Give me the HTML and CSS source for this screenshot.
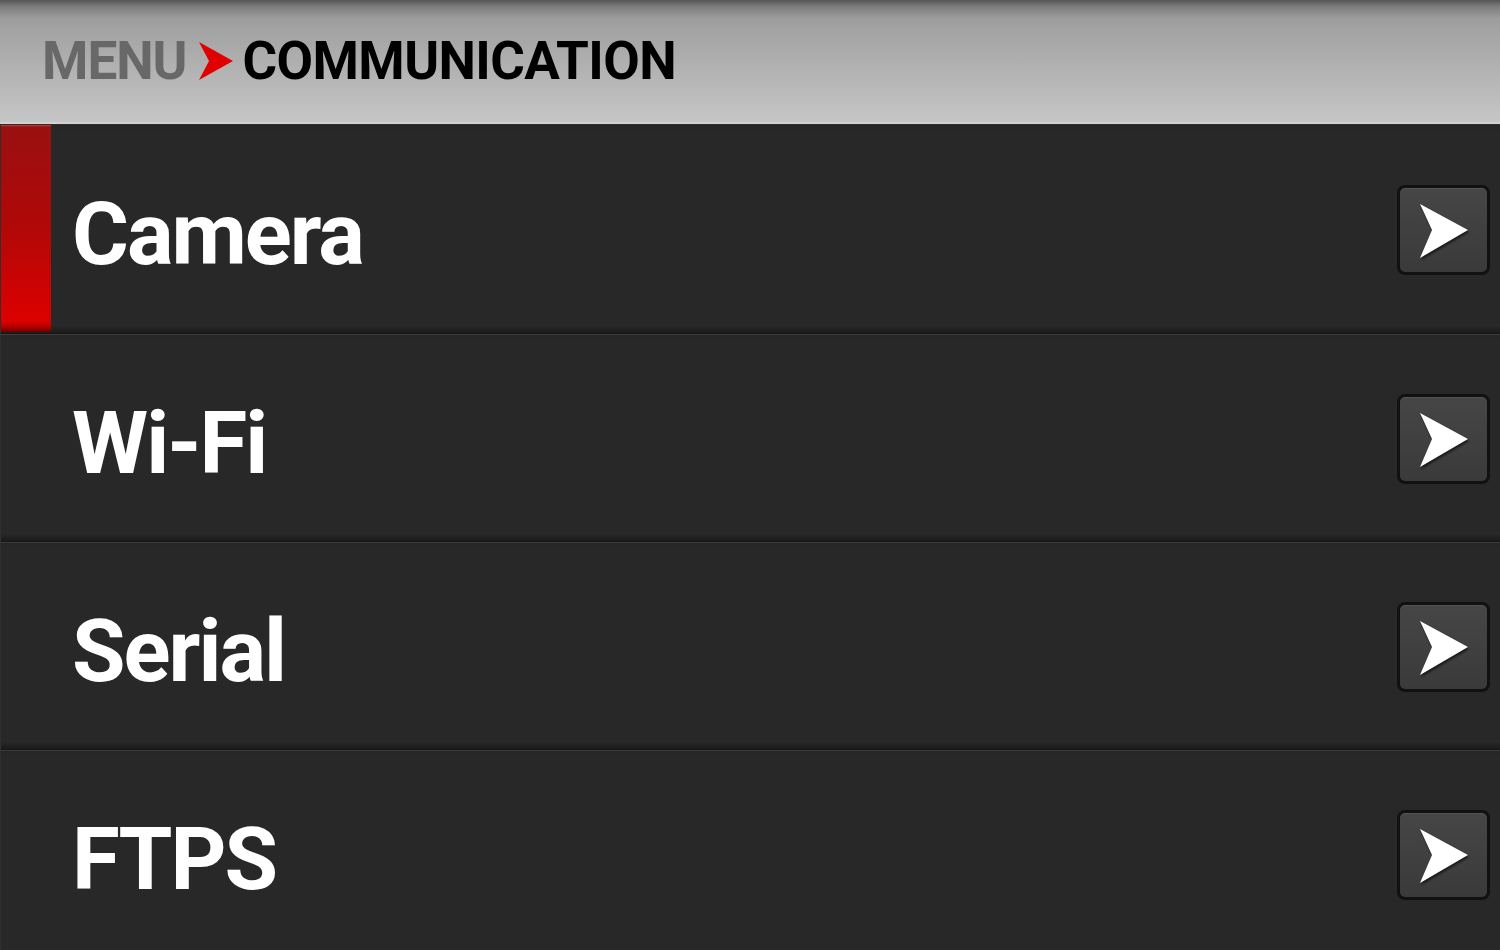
FILE: index.html
```html
<!DOCTYPE html>
<html lang="en">
<head>
    <meta charset="UTF-8">
    <meta name="viewport" content="width=device-width, initial-scale=1.0">
    <title>Communication</title>
    <link rel="stylesheet" href="styles.css">
</head>
<body>
    <header class="topbar">
        <span class="crumb-parent">MENU</span>
        <svg class="crumb-arrow" width="34" height="38" viewBox="0 0 34 38">
            <polygon points="0,0 34,19 0,38 10,19" fill="#e00000"/>
        </svg>
        <span class="crumb-current">COMMUNICATION</span>
    </header>
    <div class="menu-list">
        <div class="menu-row selected">
            <div class="marker"></div>
            <span class="label">Camera</span>
            <div class="go-btn">
                <svg width="52" height="56" viewBox="0 0 52 56"><polygon points="2,2 50,28 2,56 14,28" fill="#fff"/></svg>
            </div>
        </div>
        <div class="menu-row">
            <div class="marker"></div>
            <span class="label">Wi-Fi</span>
            <div class="go-btn">
                <svg width="52" height="56" viewBox="0 0 52 56"><polygon points="2,2 50,28 2,56 14,28" fill="#fff"/></svg>
            </div>
        </div>
        <div class="menu-row">
            <div class="marker"></div>
            <span class="label">Serial</span>
            <div class="go-btn">
                <svg width="52" height="56" viewBox="0 0 52 56"><polygon points="2,2 50,28 2,56 14,28" fill="#fff"/></svg>
            </div>
        </div>
        <div class="menu-row">
            <div class="marker"></div>
            <span class="label">FTPS</span>
            <div class="go-btn">
                <svg width="52" height="56" viewBox="0 0 52 56"><polygon points="2,2 50,28 2,56 14,28" fill="#fff"/></svg>
            </div>
        </div>
    </div>
</body>
</html>
```

FILE: styles.css
```css
body {
    margin: 0;
    padding: 0;
    width: 1500px;
    height: 950px;
    overflow: hidden;
    background-color: #282828;
    font-family: Roboto, "Liberation Sans", sans-serif;
}

.topbar {
    height: 124px;
    border-bottom: 2px solid #d2d2d2;
    display: flex;
    align-items: center;
    padding-left: 42px;
    box-sizing: border-box;
    background: linear-gradient(to bottom, #555 0px, #7a7a7a 6px, #9c9c9c 18px, #a3a3a3 30px, #c6c6c6 122px);
    font-weight: bold;
    font-size: 53px;
    letter-spacing: -1px;
}

.crumb-parent {
    color: #686868;
}

.crumb-arrow {
    margin: 0 10px 0 12px;
}

.crumb-current {
    color: #000;
    letter-spacing: -0.6px;
}

.menu-row {
    height: 208px;
    display: flex;
    align-items: center;
    background: linear-gradient(to bottom, #262626 0, #282828 8px, #282828 199px, #1c1c1c 205px, #121212 208px);
    border-top: 1px solid #3c3c3c;
    border-left: 1px solid #303030;
    box-sizing: border-box;
}

.menu-row:first-child {
    height: 210px;
    border-top: 1px solid #2e2e2e;
    background: linear-gradient(to bottom, #262626 0, #282828 8px, #282828 201px, #1c1c1c 207px, #121212 210px);
}

.marker {
    width: 50px;
    align-self: stretch;
    margin-bottom: 2px;
}

.selected .marker {
    background: linear-gradient(to bottom, #c04040 0, #9a1010 2px, #b00808 100px, #dd0000 196px, #b00000 202px, #6a0000 207px);
}

.label {
    flex: 1;
    color: #fff;
    font-weight: bold;
    font-size: 87px;
    letter-spacing: -2px;
    padding-left: 21px;
    padding-top: 8px;
}

.go-btn {
    width: 93px;
    height: 90px;
    margin-right: 10px;
    box-sizing: border-box;
    border: 3px solid #111;
    border-radius: 8px;
    background: linear-gradient(to bottom, #464646, #3a3a3a);
    box-shadow: inset 0 1px 0 #555;
    display: flex;
    align-items: center;
    justify-content: center;
}

.go-btn svg {
    margin-left: 1px;
    filter: drop-shadow(1px 2px 1px rgba(0, 0, 0, 0.6));
}
```
